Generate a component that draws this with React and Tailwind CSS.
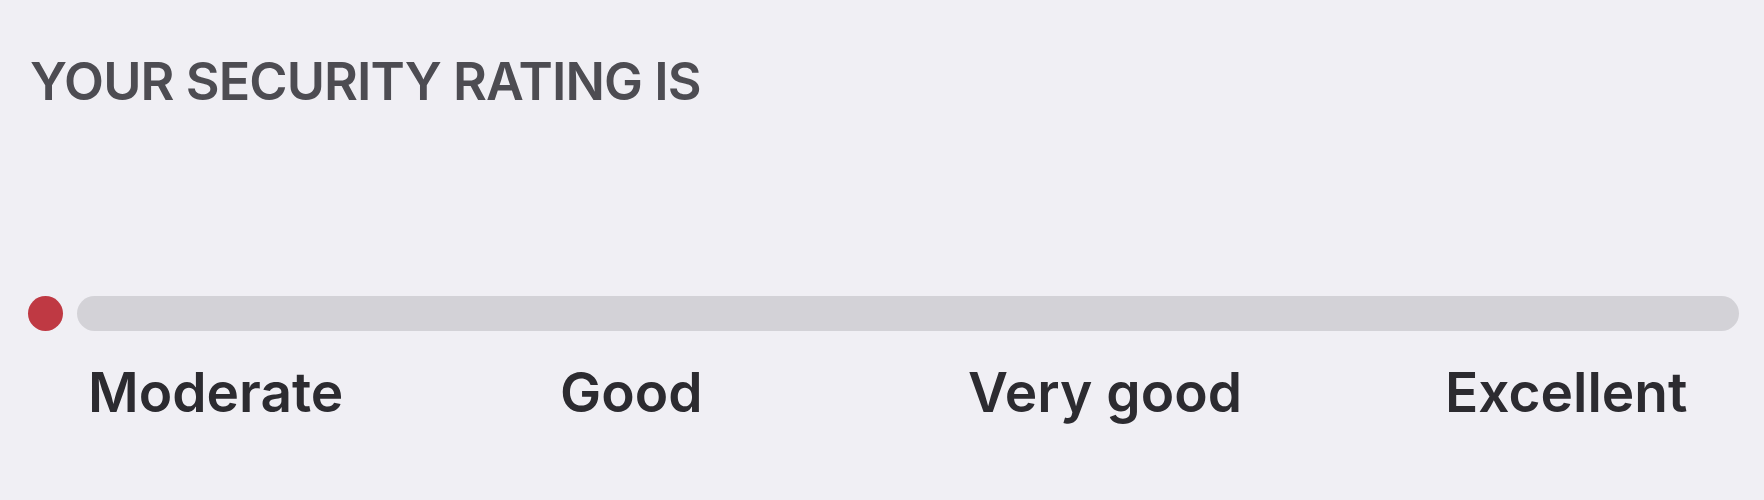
import React from "react";

const levels = [
  { label: "Moderate", width: "w-[472px]" },
  { label: "Good", width: "w-[408px]" },
  { label: "Very good", width: "w-[477px]" },
  { label: "Excellent", width: "" },
];

const SecurityRating = () => {
  return (
    <div className="w-[1764px] h-[500px] bg-[#f0eff4] font-['Inter',sans-serif] overflow-hidden">
      {/* Title */}
      <div className="pt-[56px] pl-[30px]">
        <h1 className="text-[52px] leading-none font-semibold text-[#4d4c52] tracking-[-0.9px]">
          YOUR SECURITY RATING IS
        </h1>
      </div>

      {/* Rating bar */}
      <div className="mt-[188px] pl-[28px] flex items-center gap-[14px]">
        <div className="w-[35px] h-[35px] rounded-full bg-[#bf3943] shrink-0" />
        <div className="w-[1662px] h-[35px] rounded-full bg-[#d3d2d7]" />
      </div>

      {/* Labels */}
      <div className="mt-[34px] pl-[88px] flex">
        {levels.map((lvl) => (
          <div key={lvl.label} className={`${lvl.width} shrink-0`}>
            <span className="text-[55px] leading-none font-semibold text-[#2c2b30] tracking-[0px]">
              {lvl.label}
            </span>
          </div>
        ))}
      </div>
    </div>
  );
};

export default function App() {
  return <SecurityRating />;
}
